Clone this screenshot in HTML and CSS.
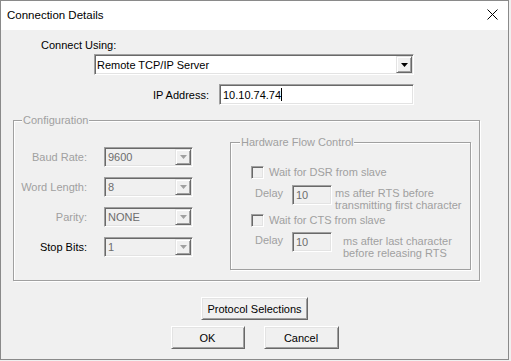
FILE: index.html
```html
<!DOCTYPE html>
<html>
<head>
<meta charset="utf-8">
<link rel="stylesheet" href="styles.css">
</head>
<body>
<div class="window">
  <div class="titlebar">
    <span class="title">Connection Details</span>
    <svg class="close" width="11" height="11" viewBox="0 0 11 11"><path d="M0.5 0.5 L10.5 10.5 M10.5 0.5 L0.5 10.5" stroke="#000" stroke-width="1" fill="none"/></svg>
  </div>
  <div class="content">
    <div class="connect-label">Connect Using:</div>
    <div class="combo sunken main-combo">
      <span class="combo-text">Remote TCP/IP Server</span>
      <span class="drop"><svg width="7" height="4" viewBox="0 0 7 4"><path d="M0 0 H7 L3.5 4 Z" fill="#000"/></svg></span>
    </div>
    <div class="ip-row">
      <span class="ip-label">IP Address:</span>
      <div class="edit sunken ip-edit">10.10.74.74<span class="caret"></span></div>
    </div>

    <div class="group config">
      <span class="legend">Configuration</span>
      <div class="fields">
        <span class="flabel disabled">Baud Rate:</span>
        <div class="combo sunken small-combo"><span class="combo-text">9600</span><span class="drop"><svg width="7" height="4" viewBox="0 0 7 4"><path d="M0 0 H7 L3.5 4 Z" fill="#a0a0a0"/></svg></span></div>
        <span class="flabel disabled">Word Length:</span>
        <div class="combo sunken small-combo"><span class="combo-text">8</span><span class="drop"><svg width="7" height="4" viewBox="0 0 7 4"><path d="M0 0 H7 L3.5 4 Z" fill="#a0a0a0"/></svg></span></div>
        <span class="flabel disabled">Parity:</span>
        <div class="combo sunken small-combo"><span class="combo-text">NONE</span><span class="drop"><svg width="7" height="4" viewBox="0 0 7 4"><path d="M0 0 H7 L3.5 4 Z" fill="#a0a0a0"/></svg></span></div>
        <span class="flabel">Stop Bits:</span>
        <div class="combo sunken small-combo"><span class="combo-text">1</span><span class="drop"><svg width="7" height="4" viewBox="0 0 7 4"><path d="M0 0 H7 L3.5 4 Z" fill="#a0a0a0"/></svg></span></div>
      </div>

      <div class="group hw">
        <span class="legend">Hardware Flow Control</span>
        <div class="check-row first">
          <span class="checkbox sunken"></span>
          <span class="disabled">Wait for DSR from slave</span>
        </div>
        <div class="delay-row">
          <span class="delay-label disabled">Delay</span>
          <div class="edit sunken delay-edit">10</div>
          <span class="delay-text disabled">ms after RTS before<br>transmitting first character</span>
        </div>
        <div class="check-row second">
          <span class="checkbox sunken"></span>
          <span class="disabled">Wait for CTS from slave</span>
        </div>
        <div class="delay-row second-delay">
          <span class="delay-label disabled">Delay</span>
          <div class="edit sunken delay-edit">10</div>
          <span class="delay-text wide disabled">ms after last character<br>before releasing RTS</span>
        </div>
      </div>
    </div>

    <div class="buttons">
      <button class="btn proto">Protocol Selections</button>
      <div class="btn-row">
        <button class="btn ok">OK</button>
        <button class="btn cancel">Cancel</button>
      </div>
    </div>
  </div>
</div>
</body>
</html>
```

FILE: styles.css
```css
html, body {
  margin: 0;
  padding: 0;
  background: #f0f0f0;
}
body {
  width: 511px;
  height: 361px;
  overflow: hidden;
  font-family: "Liberation Sans", Arial, sans-serif;
  font-size: 11px;
  color: #000;
}
.window {
  width: 509px;
  height: 360px;
  box-sizing: border-box;
  border: 1px solid #8a8a8a;
  background: #f0f0f0;
  display: flex;
  flex-direction: column;
}
.titlebar {
  height: 29px;
  flex: none;
  background: #fff;
  display: flex;
  align-items: center;
  justify-content: space-between;
  padding: 0 10px 0 6px;
}
.title {
  font-size: 11.5px;
  margin-top: -1px;
}
.close {
  display: block;
  margin-top: -2px;
}
.content {
  flex: 1;
  display: flex;
  flex-direction: column;
  align-items: flex-start;
}
.connect-label {
  margin: 9px 0 0 40px;
  line-height: 13px;
}
.sunken {
  box-sizing: border-box;
  border: 1px solid;
  border-color: #a0a0a0 #fff #fff #a0a0a0;
  box-shadow: inset 1px 1px 0 #696969, inset -1px -1px 0 #e3e3e3;
}
.combo {
  display: flex;
  align-items: stretch;
  padding: 1px;
  background: #fff;
}
.combo-text {
  flex: 1;
  padding-left: 1px;
  display: flex;
  align-items: center;
  white-space: nowrap;
}
.drop {
  box-sizing: border-box;
  width: 16px;
  flex: none;
  background: #f0f0f0;
  border: 1px solid;
  border-color: #e3e3e3 #696969 #696969 #e3e3e3;
  box-shadow: inset 1px 1px 0 #fff, inset -1px -1px 0 #a0a0a0;
  display: flex;
  align-items: center;
  justify-content: center;
}
.drop svg { display: block; }
.main-combo {
  margin: 2px 0 0 93px;
  width: 320px;
  height: 21px;
}
.ip-row {
  margin-top: 9px;
  width: 413px;
  display: flex;
  justify-content: flex-end;
  align-items: center;
  gap: 10px;
}
.edit {
  background: #fff;
  display: flex;
  align-items: center;
  padding-left: 3px;
  white-space: nowrap;
}
.ip-edit {
  width: 195px;
  height: 21px;
}
.caret {
  display: inline-block;
  width: 1px;
  height: 13px;
  background: #000;
  margin-left: 0;
}
.group {
  position: relative;
  box-sizing: border-box;
  border: 1px solid #a0a0a0;
  box-shadow: 1px 1px 0 #fff, inset 1px 1px 0 #fff;
}
.legend {
  position: absolute;
  top: -7px;
  line-height: 13px;
  padding: 0 1px;
  background: #f0f0f0;
  color: #a0a0a0;
}
.config {
  margin: 15px 0 0 12px;
  width: 467px;
  height: 161px;
  display: flex;
  align-items: flex-start;
}
.config > .legend { left: 8px; }
.disabled { color: #a0a0a0; }
.fields {
  margin-top: 26px;
  display: grid;
  grid-template-columns: 73px 89px;
  column-gap: 17px;
  row-gap: 10px;
  align-items: center;
}
.flabel {
  text-align: right;
  white-space: nowrap;
  line-height: 13px;
}
.small-combo {
  width: 89px;
  height: 20px;
  background: #f0f0f0;
  color: #6d6d6d;
}
.small-combo .combo-text { padding-left: 2px; }
.hw {
  margin: 21px 0 0 37px;
  width: 241px;
  height: 128px;
  padding-left: 20px;
}
.hw > .legend { left: 9px; }
.check-row {
  display: flex;
  align-items: center;
  gap: 5px;
  height: 13px;
  line-height: 13px;
  white-space: nowrap;
}
.check-row.first { margin-top: 23px; }
.check-row.second { margin-top: 3px; }
.checkbox {
  width: 13px;
  height: 13px;
  background: #f0f0f0;
  flex: none;
}
.delay-row {
  display: flex;
  align-items: flex-start;
  margin-top: 6px;
  height: 26px;
}
.delay-row.second-delay { margin-top: 5px; }
.delay-label {
  width: 37px;
  margin-left: 4px;
  margin-top: 2px;
  line-height: 12px;
}
.delay-edit {
  width: 40px;
  height: 20px;
  background: #f0f0f0;
  color: #6d6d6d;
}
.delay-text {
  margin: 2px 0 0 3px;
  line-height: 12px;
  white-space: nowrap;
}
.delay-text.wide { margin: 3px 0 0 11px; }
.buttons {
  align-self: stretch;
  margin-top: 16px;
  display: flex;
  flex-direction: column;
  align-items: center;
}
.btn-row {
  margin-top: 6px;
  display: flex;
  gap: 19px;
}
.btn {
  box-sizing: border-box;
  height: 23px;
  padding: 0;
  font-family: "Liberation Sans", Arial, sans-serif;
  font-size: 11px;
  color: #000;
  background: #f0f0f0;
  border: 1px solid;
  border-color: #fff #696969 #696969 #fff;
  box-shadow: inset 1px 1px 0 #e3e3e3, inset -1px -1px 0 #a0a0a0;
}
.proto { width: 107px; }
.ok { width: 74px; }
.cancel { width: 75px; }
```
